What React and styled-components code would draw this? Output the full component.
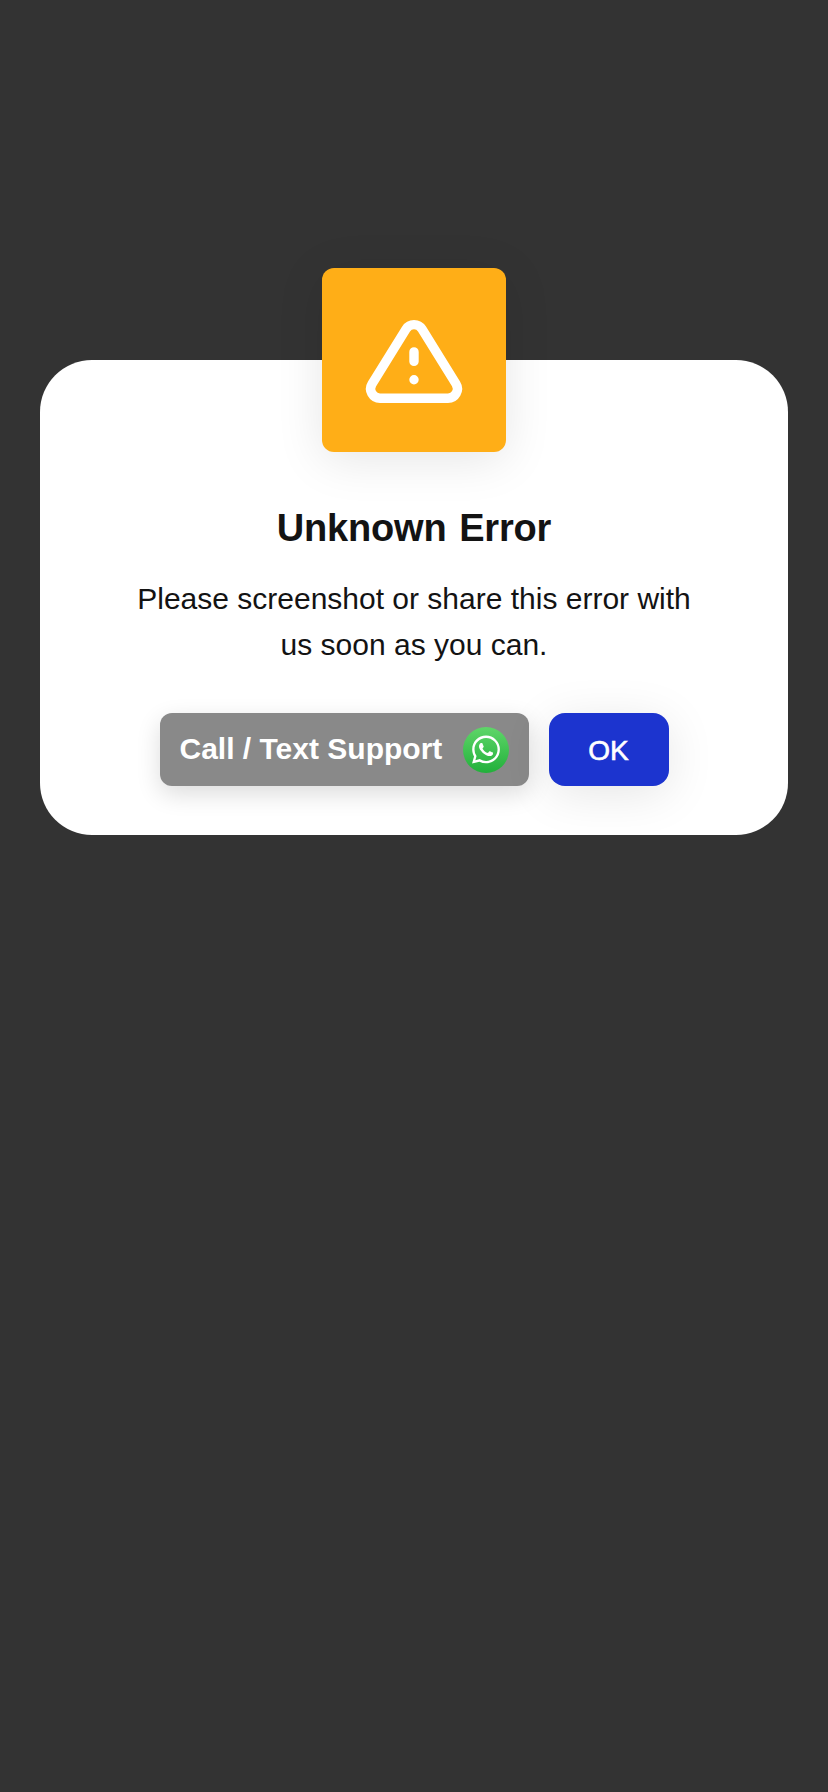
import React from "react";
import styled, { createGlobalStyle } from "styled-components";

const GlobalStyle = createGlobalStyle`
  *, *::before, *::after { box-sizing: border-box; }
  body {
    margin: 0;
    background: #333333;
    font-family: "Liberation Sans", Arial, sans-serif;
    color: #131313;
  }
`;

const Backdrop = styled.main`
  min-height: 1792px;
  padding: 360px 40px 0;
  background: #333333;
`;

const Dialog = styled.section`
  display: flex;
  flex-direction: column;
  align-items: center;
  height: 475px;
  border-radius: 52px;
  background: #ffffff;
`;

const Badge = styled.div`
  flex: none;
  width: 184px;
  height: 184px;
  margin-top: -92px;
  border-radius: 12px;
  background: #ffae17;
  box-shadow: 0 8px 48px rgba(0, 0, 0, 0.1);

  svg { display: block; }
`;

const Title = styled.h1`
  margin: 54px 0 0;
  font-size: 38px;
  line-height: 44px;
  font-weight: 700;
  letter-spacing: -0.2px;
  word-spacing: 2.4px;
  white-space: nowrap;
`;

const Message = styled.p`
  margin: 26px 0 0;
  font-size: 30px;
  line-height: 46px;
  text-align: center;
  white-space: nowrap;
`;

const Actions = styled.div`
  display: flex;
  gap: 20px;
  margin-top: 45px;
`;

const Button = styled.button`
  display: flex;
  align-items: center;
  height: 73px;
  padding: 0;
  border: 0;
  color: #ffffff;
  font-family: inherit;
  white-space: nowrap;
`;

const SupportButton = styled(Button)`
  justify-content: space-between;
  width: 369px;
  padding: 0 20px;
  border-radius: 12px;
  background: #898989;
  box-shadow: 0 8px 24px rgba(0, 0, 0, 0.14);
  font-size: 30px;
  font-weight: 700;

  svg { display: block; flex: none; }
`;

const SupportLabel = styled.span`
  padding-bottom: 2px;
`;

const OkButton = styled(Button)`
  justify-content: center;
  width: 120px;
  padding-top: 2px;
  border-radius: 16px;
  background: #1c34cf;
  box-shadow: 0 8px 48px rgba(0, 0, 0, 0.1);
  font-size: 28px;
  -webkit-text-stroke: 0.6px #ffffff;
`;

function WarningIcon() {
  return (
    <svg width="184" height="184" viewBox="0 0 184 184" fill="none" stroke="#fff" strokeWidth="9.4" strokeLinecap="round" strokeLinejoin="round" aria-hidden="true">
      <path d="M58 130.2H126A9.4 9.4 0 0 0 134 115.9L100 61.1A9.4 9.4 0 0 0 84 61.1L50 115.9A9.4 9.4 0 0 0 58 130.2Z" />
      <path d="M92 83.9V93.4M92 111.7V111.8" />
    </svg>
  );
}

function WhatsAppIcon() {
  return (
    <svg width="46" height="46" viewBox="0 0 46 46" aria-hidden="true">
      <defs>
        <linearGradient id="whatsapp-green" x1="0" y1="0" x2="0" y2="1">
          <stop offset="0" stopColor="#5fd669" />
          <stop offset="1" stopColor="#22b03b" />
        </linearGradient>
      </defs>
      <circle cx="23" cy="23" r="23" fill="url(#whatsapp-green)" />
      <g transform="translate(9 8.6) scale(1.165)" fill="#fff">
        <path d="M17.472 14.382c-.297-.149-1.758-.867-2.03-.967-.273-.099-.471-.148-.67.15-.197.297-.767.966-.94 1.164-.173.199-.347.223-.644.075-.297-.15-1.255-.463-2.39-1.475-.883-.788-1.48-1.761-1.653-2.059-.173-.297-.018-.458.13-.606.134-.133.298-.347.446-.52.149-.174.198-.298.298-.497.099-.198.05-.371-.025-.52-.075-.149-.669-1.612-.916-2.207-.242-.579-.487-.5-.669-.51-.173-.008-.371-.01-.57-.01-.198 0-.52.074-.792.372-.272.297-1.04 1.016-1.04 2.479 0 1.462 1.065 2.875 1.213 3.074.149.198 2.096 3.2 5.077 4.487.709.306 1.262.489 1.694.625.712.227 1.36.195 1.871.118.571-.085 1.758-.719 2.006-1.413.248-.694.248-1.289.173-1.413-.074-.124-.272-.198-.57-.347m-5.421 7.403h-.004a9.87 9.87 0 01-5.031-1.378l-.361-.214-3.741.982.998-3.648-.235-.374a9.86 9.86 0 01-1.51-5.26c.001-5.45 4.436-9.884 9.888-9.884 2.64 0 5.122 1.03 6.988 2.898a9.825 9.825 0 012.893 6.994c-.003 5.45-4.437 9.884-9.885 9.884m8.413-18.297A11.815 11.815 0 0012.05 0C5.495 0 .16 5.335.157 11.892c0 2.096.547 4.142 1.588 5.945L.057 24l6.305-1.654a11.882 11.882 0 005.683 1.448h.005c6.554 0 11.89-5.335 11.893-11.893a11.821 11.821 0 00-3.48-8.413Z" />
      </g>
    </svg>
  );
}

export default function App() {
  return (
    <>
      <GlobalStyle />
      <Backdrop>
        <Dialog role="alertdialog" aria-labelledby="error-title">
          <Badge><WarningIcon /></Badge>
          <Title id="error-title">Unknown Error</Title>
          <Message>
            Please screenshot or share this error with
            <br />
            us soon as you can.
          </Message>
          <Actions>
            <SupportButton>
              <SupportLabel>Call / Text Support</SupportLabel>
              <WhatsAppIcon />
            </SupportButton>
            <OkButton>OK</OkButton>
          </Actions>
        </Dialog>
      </Backdrop>
    </>
  );
}
